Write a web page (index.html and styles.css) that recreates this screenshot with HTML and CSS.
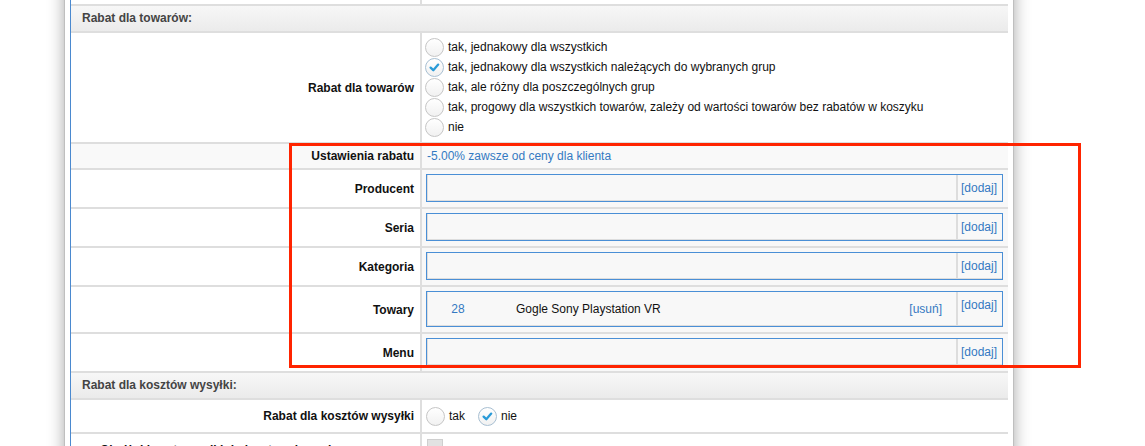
FILE: index.html
```html
<!DOCTYPE html>
<html lang="pl">
<head>
<meta charset="utf-8">
<title>Rabat</title>
<link rel="stylesheet" href="styles.css">
</head>
<body>
<div class="window">
  <div class="frame">
    <div class="form">
      <div class="lab top"></div><div class="val top"></div>

      <div class="head">Rabat dla towarów:</div>

      <div class="lab">Rabat dla towarów</div>
      <div class="val radios">
        <label class="opt"><span class="radio"></span>tak, jednakowy dla wszystkich</label>
        <label class="opt"><span class="radio on"><svg viewBox="0 0 17 17" width="17" height="17"><path d="M4.6 8.6 L7.3 11.2 L12.2 5.6" fill="none" stroke="#2a9bd8" stroke-width="2.3" stroke-linecap="round" stroke-linejoin="round"/></svg></span>tak, jednakowy dla wszystkich należących do wybranych grup</label>
        <label class="opt"><span class="radio"></span>tak, ale różny dla poszczególnych grup</label>
        <label class="opt"><span class="radio"></span>tak, progowy dla wszystkich towarów, zależy od wartości towarów bez rabatów w koszyku</label>
        <label class="opt"><span class="radio"></span>nie</label>
      </div>

      <div class="lab grey short">Ustawienia rabatu</div>
      <div class="val grey short"><a class="link">-5.00% zawsze od ceny dla klienta</a></div>

      <div class="lab">Producent</div>
      <div class="val field"><div class="box"><div class="cell"></div><div class="cell add"><a class="link">[dodaj]</a></div></div></div>

      <div class="lab">Seria</div>
      <div class="val field"><div class="box"><div class="cell"></div><div class="cell add"><a class="link">[dodaj]</a></div></div></div>

      <div class="lab">Kategoria</div>
      <div class="val field"><div class="box"><div class="cell"></div><div class="cell add"><a class="link">[dodaj]</a></div></div></div>

      <div class="lab">Towary</div>
      <div class="val field"><div class="box tall"><div class="cell list"><span class="id link">28</span><span class="name">Gogle Sony Playstation VR</span><a class="link del">[usuń]</a></div><div class="cell add"><a class="link">[dodaj]</a></div></div></div>

      <div class="lab">Menu</div>
      <div class="val field"><div class="box"><div class="cell"></div><div class="cell add"><a class="link">[dodaj]</a></div></div></div>

      <div class="head">Rabat dla kosztów wysyłki:</div>

      <div class="lab mid">Rabat dla kosztów wysyłki</div>
      <div class="val mid inline">
        <label class="opt"><span class="radio"></span>tak</label>
        <label class="opt"><span class="radio on"><svg viewBox="0 0 17 17" width="17" height="17"><path d="M4.6 8.6 L7.3 11.2 L12.2 5.6" fill="none" stroke="#2a9bd8" stroke-width="2.3" stroke-linecap="round" stroke-linejoin="round"/></svg></span>nie</label>
      </div>

      <div class="lab last">Obniżaj koszt wysyłki do kwoty w koszyku</div>
      <div class="val last"><span class="check"></span></div>
    </div>
  </div>
</div>
<div class="mark"></div>
</body>
</html>
```
FILE: styles.css
```css
html, body {
  margin: 0;
  padding: 0;
  background: #fff;
  overflow: hidden;
  height: 446px;
}
body {
  font-family: "Liberation Sans", Arial, sans-serif;
  font-size: 12px;
  color: #111;
  position: relative;
}
.window {
  width: 948px;
  margin: -30px 0 0 65px;
  padding: 0 5px;
  box-sizing: border-box;
  background: #fff;
  box-shadow: 0 0 16px rgba(0,0,0,0.38), 0 0 1px rgba(0,0,0,0.5);
  height: 600px;
}
.frame {
  border-left: 1px solid #4a89cf;
  border-right: 1px solid #4a89cf;
  height: 100%;
}
.form {
  display: grid;
  grid-template-columns: 349px 1fr;
  gap: 2px;
  background: #dedede;
  margin-right: -1px;
}
.top { height: 34px; }
.head {
  grid-column: 1 / -1;
  height: 25px;
  line-height: 25px;
  padding-left: 11px;
  font-weight: bold;
  color: #444;
  background: linear-gradient(#f7f7f7, #ebebeb);
}
.lab {
  background: #fff;
  font-weight: bold;
  display: flex;
  align-items: center;
  justify-content: flex-end;
  padding-right: 6px;
}
.val {
  background: #fff;
}
.grey { background: #f9f9f9; }
.short { height: 24px; }
.val.short {
  display: flex;
  align-items: center;
  padding-left: 5px;
}
.link {
  color: #3479c2;
  text-decoration: none;
}
.radios {
  padding: 4px 3px 5px 3px;
}
.opt {
  display: flex;
  align-items: center;
  height: 20px;
  gap: 4px;
  white-space: nowrap;
}
.radio {
  width: 17px;
  height: 17px;
  border: 1px solid #c6c6c6;
  border-radius: 50%;
  background: linear-gradient(#fff, #f1f1f1);
  box-sizing: content-box;
  display: inline-block;
  flex: none;
  position: relative;
}
.radio.on { border-color: #a8bfd2; }
.radio svg { display: block; }
.field {
  background: #f8f8f8;
  padding: 4px 5px 5px 4px;
}
.box {
  display: grid;
  grid-template-columns: 1fr 44px;
  column-gap: 2px;
  border: 1px solid #4a8fd6;
  background: #dddddd;
  padding: 0 0 1px 1px;
  height: 28px;
  box-sizing: border-box;
}
.box.tall { height: 36px; }
.cell { background: #f8f8f8; }
.add {
  padding: 6px 0 0 3px;
  line-height: 14px;
}
.list {
  display: flex;
  align-items: center;
}
.id {
  width: 60px;
  text-align: center;
}
.name { margin-left: 28px; flex: 1; }
.del { margin-right: 14px; color: #3479c2; }
.mid { height: 32px; }
.inline {
  display: flex;
  align-items: center;
  padding-left: 4px;
  gap: 13px;
}
.lab.last {
  justify-content: flex-start;
  align-items: flex-start;
  padding: 9px 0 0 29px;
  height: 60px;
}
.val.last { padding: 5px 0 0 5px; }
.check {
  display: block;
  width: 14px;
  height: 14px;
  background: #e2e2e2;
  border: 1px solid #cfcfcf;
}
.mark {
  position: absolute;
  left: 289px;
  top: 143px;
  width: 792px;
  height: 225px;
  box-sizing: border-box;
  border: 3px solid #ff2400;
}
```
